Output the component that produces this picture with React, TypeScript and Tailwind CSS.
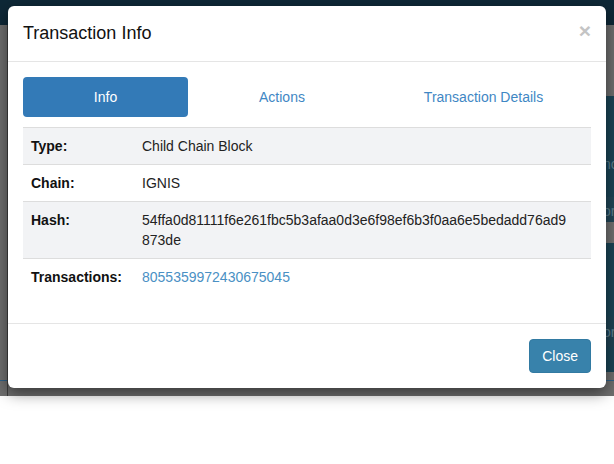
import React from "react";

const rows = [
  { label: "Type:", value: ["Child Chain Block"], shaded: true },
  { label: "Chain:", value: ["IGNIS"], shaded: false },
  {
    label: "Hash:",
    value: ["54ffa0d81111f6e261fbc5b3afaa0d3e6f98ef6b3f0aa6e5bedadd76ad9", "873de"],
    shaded: true,
  },
  { label: "Transactions:", value: ["8055359972430675045"], shaded: false, link: true },
];

const tabs = [
  { name: "Info", width: "w-[165px]", active: true },
  { name: "Actions", width: "w-[188px]", active: false },
  { name: "Transaction Details", width: "w-[215px]", active: false },
];

export default function App() {
  return (
    <div className="relative w-[614px] h-[464px] bg-white overflow-hidden font-['Liberation_Sans',Arial,sans-serif]">
      {/* dimmed page behind the modal */}
      <div className="flex flex-col h-[396px] bg-[#6e6e6e]">
        <div className="h-[25px] bg-[#0e2837]" />
        <div className="flex flex-1">
          <div className="w-[8px] border-r border-[#3d3d3d] flex flex-col justify-end">
            <div className="h-[1px] bg-[#2e5f86] mb-[15px]" />
          </div>
          <div className="flex-1 flex flex-col justify-end">
            <div className="h-[1px] bg-[#2e5f86] mb-[15px]" />
          </div>
          <div className="w-[18px] flex flex-col text-[14px] text-[#5d7e8c] leading-5 overflow-hidden whitespace-nowrap">
            <div className="h-[71px] bg-[#6e6e6e]" />
            <div className="h-[101px] bg-[#1b4456] flex flex-col justify-end pl-[7px] pb-[23px]">nc</div>
            <div className="h-[25px] bg-[#214657] pl-[7px] pt-[4px]">or</div>
            <div className="h-[21px] bg-[#707070]" />
            <div className="h-[74px] bg-[#1b4456]" />
            <div className="h-[30px] bg-[#1f4354] pl-[7px] pt-[5px]">or</div>
            <div className="h-[25px] bg-[#1b4456]" />
            <div className="h-[8px] bg-[#6e6e6e]" />
            <div className="h-[1px] bg-[#2e5f86]" />
            <div className="flex-1 bg-[#6e6e6e]" />
          </div>
        </div>
      </div>

      {/* modal */}
      <div className="absolute left-[8px] top-[6px] w-[598px] bg-white rounded-[6px] shadow-[0_5px_15px_rgba(0,0,0,0.5)]">
        <div className="flex justify-between items-start px-[15px] pt-[15px] pb-[15px] border-b border-[#e5e5e5]">
          <h4 className="text-[18px] leading-[25px] text-[#111]">Transaction Info</h4>
          <button className="text-[21px] font-bold leading-none text-[#c4c4c4] -mt-[1px] mr-[0px]">×</button>
        </div>

        <div className="px-[15px] pt-[15px] pb-[28px]">
          <div className="flex">
            {tabs.map((tab) => (
              <div
                key={tab.name}
                className={`${tab.width} h-[40px] flex items-center justify-center text-[14px] rounded-[4px] ${
                  tab.active ? "bg-[#337ab7] text-white" : "text-[#3f87c4]"
                }`}
              >
                {tab.name}
              </div>
            ))}
          </div>

          <table className="w-full mt-[10px] border-collapse text-[14px] leading-5">
            <tbody>
              {rows.map((row) => (
                <tr key={row.label} className={row.shaded ? "bg-[#f2f3f5]" : ""}>
                  <td className="w-[111px] whitespace-nowrap border-t border-[#dddddd] p-[8px] font-bold text-[#111] align-top">
                    {row.label}
                  </td>
                  <td
                    className={`border-t border-[#dddddd] p-[8px] align-top ${
                      row.link ? "text-[#4a90c4]" : "text-[#222]"
                    }`}
                  >
                    {row.value.map((line) => (
                      <div key={line}>{line}</div>
                    ))}
                  </td>
                </tr>
              ))}
            </tbody>
          </table>
        </div>

        <div className="flex justify-end p-[15px] border-t border-[#e5e5e5]">
          <button className="h-[34px] px-[12px] rounded-[4px] bg-[#3882ab] border border-[#327aa2] text-white text-[14px]">
            Close
          </button>
        </div>
      </div>
    </div>
  );
}
